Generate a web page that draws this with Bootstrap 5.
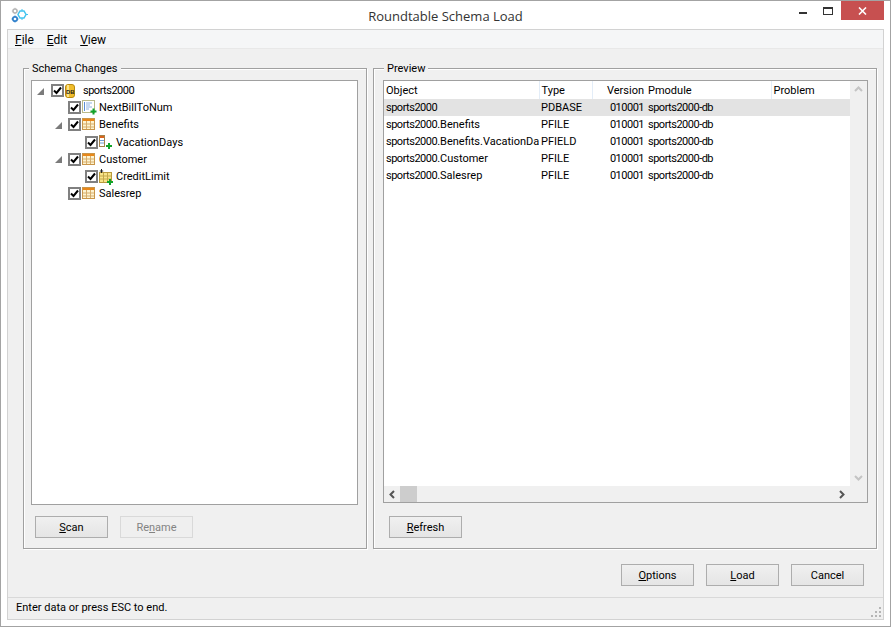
<!DOCTYPE html>
<html lang="en">
<head>
<meta charset="utf-8">
<title>Roundtable Schema Load</title>
<link rel="stylesheet" href="https://cdn.jsdelivr.net/npm/bootstrap@5.3.0/dist/css/bootstrap.min.css">
<style>
html,body{height:627px;overflow:hidden;background:#fff}
body{font:11px/17px Roboto,"Liberation Sans",sans-serif;color:#000}
.frame{width:891px;height:627px;border:1px solid #a3a3a3;padding:0 6px 5px;background:#fff}
.tbar{height:28px;position:relative;margin:0 -6px}
.tname{font:13px/28px "Open Sans",sans-serif;color:#333;text-align:center;padding-top:1px}
.tlogo{position:absolute;left:9px;top:6px}
.tctl{position:absolute;right:6px;top:0;height:19px}
.xbtn{width:43px;height:19px;background:#c75050;color:#fff}
.client{height:591px;border:1px solid #d2d2d2;background:#f0f0f0}
.menubar{height:19px;background:#f5f6f7;border-bottom:1px solid #e8e8e8;padding-left:7px;gap:13px;line-height:20px;font-size:12px}
.wmain{padding:19px 0 0 15px;gap:6px;height:500px}
.fset{height:481px;border:1px solid #a0a0a0;box-shadow:1px 1px 0 #fff,inset 1px 1px 0 #fff;position:relative}
.fl{width:344px;padding:11px 0 0 7px}
.fr{width:504px;padding:11px 0 0 9px}
.fcap{position:absolute;top:-9px;background:#f0f0f0;padding:0 3px;line-height:17px}
.fl .fcap{left:5px}
.fr .fcap{left:10px}
.treebox{width:327px;height:425px;background:#fff;border:1px solid #a0a0a0;padding-top:1px}
.listbox{width:485px;height:423px;background:#fff;border:1px solid #a0a0a0;position:relative}
.trow{height:17.2px;white-space:nowrap}
.lv0{padding-left:5px}.lvt{padding-left:23px}.lv1{padding-left:36px}.lv2{padding-left:53px}
.twist{width:0;height:0;border-style:solid;border-width:0 0 7px 7px;border-color:transparent transparent #7b7b7b transparent;margin:1px 7px 0 0}
.lvt .twist{margin-right:6px}
.tick{width:13px;height:13px;border:2px solid #808080;background:#fff;flex:none;margin-right:1px}
.tick svg,.ico{display:block;flex:none}
.lab0{margin-left:7px}.lab1{margin-left:2px}.lab2{margin-left:2px}
.lab3{margin-left:3px}.lab4{margin-left:2px}
.dg{letter-spacing:-.5px}
.wbtn{width:73px;height:22px;padding:1px 0 0;border:1px solid #adadad;border-radius:0;background:linear-gradient(#f0f0f0,#e5e5e5);color:#000;font-size:11px;line-height:20px}
.wbtn:disabled{opacity:1;border-color:#d9d9d9;background:#efefef;color:#838383}
.btnrow{margin-top:11px;gap:12px;padding-left:4px}
.fr .btnrow{margin-top:13px;padding-left:6px}
.grid{table-layout:fixed;width:466px;margin:0;--bs-table-bg:transparent;font-size:11px}
.grid th,.grid td{padding:0 2px 1px;height:17px;line-height:15px;font-weight:400;white-space:nowrap;overflow:hidden;border:0;vertical-align:middle;color:#000;box-shadow:none}
.grid th{border-right:1px solid #e3edf8;height:18px;padding-bottom:0}
.grid th:nth-child(3){border-right:0}
.grid .num{text-align:right}
.grid tr.sel td{background:#e3e3e3}
.vbar{position:absolute;right:0;top:0;bottom:16px;width:17px;background:#f0f0f0}
.hbar{position:absolute;left:0;right:0;bottom:0;height:16px;background:#f0f0f0;padding-left:16px}
.thumb{width:17px;height:16px;background:#cdcdcd}
.arw{position:absolute}
.wfoot{height:48px;padding:15px 19px 0 0;gap:12px}
.stat{height:22px;border-top:1px solid #d9d9d9;padding-left:8px;line-height:20px;position:relative}
.grip{position:absolute;right:2px;bottom:2px}
</style>
</head>
<body>
<div class="frame d-flex flex-column">
  <div class="tbar">
    <svg class="tlogo" width="18" height="18" viewBox="0 0 18 18" fill="none"><path d="M10 4h4l2 3.500-2 3.500h-4l-2-3.500z" stroke="#42c4ef" stroke-width="1.500"/><path d="M12 2v2M12 11v2M16 7.500h2" stroke="#42c4ef"/><circle cx="5" cy="4" r="2" stroke="#b5b5b5" stroke-width="1.500"/><path d="M5 .8v1M5 6.200v1M1.800 4h1M7.200 4h1" stroke="#b5b5b5"/><circle cx="5" cy="12" r="2.200" stroke="#2f80cc" stroke-width="1.700"/><path d="M5 8.500v1.200M5 14.300v1.200M1.500 12h1.200M7.300 12h1.200" stroke="#2f80cc"/></svg>
    <div class="tname">Roundtable Schema Load</div>
    <div class="tctl d-flex">
      <svg width="26" height="19" viewBox="0 0 26 19" class="ico"><rect x="10" y="11" width="8" height="2" fill="#333"/></svg>
      <svg width="26" height="19" viewBox="0 0 26 19" class="ico"><rect x="8.500" y="6.500" width="9" height="7" fill="none" stroke="#333"/><rect x="8" y="6" width="10" height="2" fill="#333"/></svg>
      <div class="xbtn d-flex align-items-center justify-content-center"><svg width="9" height="8" viewBox="0 0 9 8" class="ico"><path d="M1 .5l7 7M8 .5l-7 7" stroke="#fff" stroke-width="1.600"/></svg></div>
    </div>
  </div>
  <div class="client d-flex flex-column">
    <div class="menubar d-flex">
      <span><u>F</u>ile</span><span><u>E</u>dit</span><span><u>V</u>iew</span>
    </div>
    <div class="wmain d-flex">
      <div class="fset fl">
        <span class="fcap">Schema Changes</span>
        <div class="treebox">
          <div class="trow lv0 d-flex align-items-center"><span class="twist"></span><span class="tick"><svg width="9" height="9" viewBox="0 0 9 9"><path d="M1 4.500l2.500 2.500L8 1.500" fill="none" stroke="#000" stroke-width="2"/></svg></span>
            <svg class="ico" width="11" height="14" viewBox="0 0 11 14"><rect x=".5" y=".5" width="9" height="13" rx="2.500" fill="#f0bd2c" stroke="#b98a10"/><rect x="2" y="1" width="2" height="12" fill="#fbe38a"/><text x="1" y="9.500" font-size="5.800" font-weight="700" font-family="Liberation Sans" fill="#222">DB</text></svg>
            <span class="lab0 dg">sports2000</span></div>
          <div class="trow lv1 d-flex align-items-center"><span class="tick"><svg width="9" height="9" viewBox="0 0 9 9"><path d="M1 4.500l2.500 2.500L8 1.500" fill="none" stroke="#000" stroke-width="2"/></svg></span>
            <svg class="ico" width="15" height="15" viewBox="0 0 15 15"><rect x=".5" y=".5" width="12" height="12" fill="#fff" stroke="#b9b98a"/><path d="M2.500 2v9" stroke="#5b8fd4"/><path d="M4 3h6M4 5h4M4 7h6M4 9h3" stroke="#8fb3e0"/><path d="M11.500 8.500v6M8.500 11.500h6" stroke="#12a32a" stroke-width="2"/></svg>
            <span class="lab1">NextBillToNum</span></div>
          <div class="trow lvt d-flex align-items-center"><span class="twist"></span><span class="tick"><svg width="9" height="9" viewBox="0 0 9 9"><path d="M1 4.500l2.500 2.500L8 1.500" fill="none" stroke="#000" stroke-width="2"/></svg></span>
            <svg class="ico" width="14" height="13" viewBox="0 0 14 13"><rect x=".5" y=".5" width="12" height="11" fill="#fdf3d0" stroke="#c9964a"/><rect x="1" y="1" width="11" height="2" fill="#e8871a"/><path d="M1 6h11M1 9h11M4.500 3v8M8.500 3v8" stroke="#d6ad6c"/></svg>
            <span class="lab3">Benefits</span></div>
          <div class="trow lv2 d-flex align-items-center"><span class="tick"><svg width="9" height="9" viewBox="0 0 9 9"><path d="M1 4.500l2.500 2.500L8 1.500" fill="none" stroke="#000" stroke-width="2"/></svg></span>
            <svg class="ico" width="15" height="15" viewBox="0 0 15 15"><rect x=".5" y=".5" width="5" height="11" fill="#fff" stroke="#a3824a"/><rect x="1" y="1" width="4" height="2" fill="#d9641c"/><path d="M1 5.500h4M1 8h4" stroke="#6f9bd4"/><path d="M10 8v6M7 11h6" stroke="#12a32a" stroke-width="2"/></svg>
            <span class="lab2">VacationDays</span></div>
          <div class="trow lvt d-flex align-items-center"><span class="twist"></span><span class="tick"><svg width="9" height="9" viewBox="0 0 9 9"><path d="M1 4.500l2.500 2.500L8 1.500" fill="none" stroke="#000" stroke-width="2"/></svg></span>
            <svg class="ico" width="14" height="13" viewBox="0 0 14 13"><rect x=".5" y=".5" width="12" height="11" fill="#fdf3d0" stroke="#c9964a"/><rect x="1" y="1" width="11" height="2" fill="#e8871a"/><path d="M1 6h11M1 9h11M4.500 3v8M8.500 3v8" stroke="#d6ad6c"/></svg>
            <span class="lab3">Customer</span></div>
          <div class="trow lv2 d-flex align-items-center"><span class="tick"><svg width="9" height="9" viewBox="0 0 9 9"><path d="M1 4.500l2.500 2.500L8 1.500" fill="none" stroke="#000" stroke-width="2"/></svg></span>
            <svg class="ico" width="15" height="16" viewBox="0 0 15 16"><rect x=".5" y="3.500" width="12" height="10" fill="#f8e48a" stroke="#b99a3c"/><path d="M1 7h11M1 10h11M4.500 4v9M8.500 4v9" stroke="#c4a84a"/><path d="M2.500 0v4M.8 2h3.400" stroke="#222"/><path d="M11 10v6M8 13h6" stroke="#12a32a" stroke-width="2"/></svg>
            <span class="lab4">CreditLimit</span></div>
          <div class="trow lv1 d-flex align-items-center"><span class="tick"><svg width="9" height="9" viewBox="0 0 9 9"><path d="M1 4.500l2.500 2.500L8 1.500" fill="none" stroke="#000" stroke-width="2"/></svg></span>
            <svg class="ico" width="14" height="13" viewBox="0 0 14 13"><rect x=".5" y=".5" width="12" height="11" fill="#fdf3d0" stroke="#c9964a"/><rect x="1" y="1" width="11" height="2" fill="#e8871a"/><path d="M1 6h11M1 9h11M4.500 3v8M8.500 3v8" stroke="#d6ad6c"/></svg>
            <span class="lab3">Salesrep</span></div>
        </div>
        <div class="btnrow d-flex">
          <button class="btn wbtn" type="button"><u>S</u>can</button>
          <button class="btn wbtn" type="button" disabled>Re<u>n</u>ame</button>
        </div>
      </div>
      <div class="fset fr">
        <span class="fcap">Preview</span>
        <div class="listbox">
          <table class="table grid">
            <colgroup><col style="width:155px"><col style="width:53px"><col style="width:54px"><col style="width:125px"><col style="width:79px"></colgroup>
            <thead><tr><th>Object</th><th>Type</th><th class="num">Version</th><th>Pmodule</th><th>Problem</th></tr></thead>
            <tbody>
              <tr class="sel"><td><span class="dg">sports2000</span></td><td>PDBASE</td><td class="num dg">010001</td><td class="dg">sports2000-db</td><td></td></tr>
              <tr><td><span class="dg">sports2000</span>.Benefits</td><td>PFILE</td><td class="num dg">010001</td><td class="dg">sports2000-db</td><td></td></tr>
              <tr><td><span class="dg">sports2000</span>.Benefits.VacationDays</td><td>PFIELD</td><td class="num dg">010001</td><td class="dg">sports2000-db</td><td></td></tr>
              <tr><td><span class="dg">sports2000</span>.Customer</td><td>PFILE</td><td class="num dg">010001</td><td class="dg">sports2000-db</td><td></td></tr>
              <tr><td><span class="dg">sports2000</span>.Salesrep</td><td>PFILE</td><td class="num dg">010001</td><td class="dg">sports2000-db</td><td></td></tr>
            </tbody>
          </table>
          <div class="vbar">
            <svg class="arw" style="left:4px;top:5px" width="9" height="6" viewBox="0 0 9 6"><path d="M1 5l3.500-3.500L8 5" fill="none" stroke="#c4c4c4" stroke-width="2"/></svg>
            <svg class="arw" style="left:4px;bottom:5px" width="9" height="6" viewBox="0 0 9 6"><path d="M1 1l3.500 3.500L8 1" fill="none" stroke="#c4c4c4" stroke-width="2"/></svg>
          </div>
          <div class="hbar">
            <svg class="arw" style="left:5px;top:4px" width="6" height="9" viewBox="0 0 6 9"><path d="M5 1L1.500 4.500 5 8" fill="none" stroke="#555" stroke-width="2"/></svg>
            <div class="thumb"></div>
            <svg class="arw" style="right:22px;top:4px" width="6" height="9" viewBox="0 0 6 9"><path d="M1 1l3.500 3.500L1 8" fill="none" stroke="#555" stroke-width="2"/></svg>
          </div>
        </div>
        <div class="btnrow d-flex">
          <button class="btn wbtn" type="button"><u>R</u>efresh</button>
        </div>
      </div>
    </div>
    <div class="wfoot d-flex justify-content-end">
      <button class="btn wbtn" type="button"><u>O</u>ptions</button>
      <button class="btn wbtn" type="button"><u>L</u>oad</button>
      <button class="btn wbtn" type="button">Cancel</button>
    </div>
    <div class="stat">Enter data or press ESC to end.
      <svg class="grip" width="10" height="10" viewBox="0 0 10 10" fill="#b5b5b5"><rect x="8" y="0" width="2" height="2"/><rect x="4" y="4" width="2" height="2"/><rect x="8" y="4" width="2" height="2"/><rect x="0" y="8" width="2" height="2"/><rect x="4" y="8" width="2" height="2"/><rect x="8" y="8" width="2" height="2"/></svg>
    </div>
  </div>
</div>
<script src="https://cdn.jsdelivr.net/npm/bootstrap@5.3.0/dist/js/bootstrap.bundle.min.js"></script>
</body>
</html>
